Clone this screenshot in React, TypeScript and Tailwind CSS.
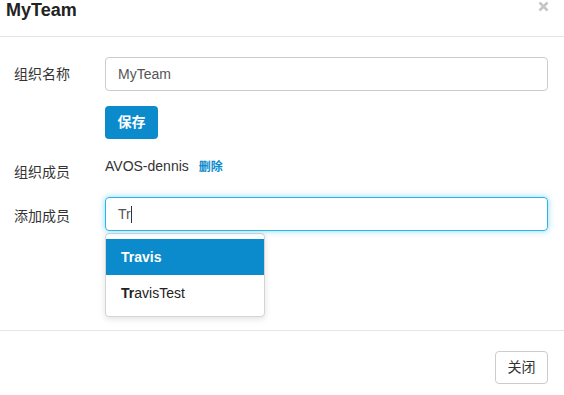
export default function App() {
  const font = { fontFamily: '"Liberation Sans", Arial, "Noto Sans CJK SC", sans-serif' };
  return (
    <div
      className="w-[564px] h-[395px] bg-white text-[#333] text-[14px] flex flex-col overflow-hidden"
      style={font}
    >
      {/* header */}
      <div className="h-[37px] border-b border-[#e5e5e5] flex justify-between pl-[6px] pr-[15px]">
        <h4 className="text-[18px] leading-[20px] font-bold text-[#222]">MyTeam</h4>
        <svg width="11" height="11" viewBox="0 0 11 11" className="mt-[1px]">
          <path d="M1.5 1.5 L9.5 9.5 M9.5 1.5 L1.5 9.5" stroke="#c6c6c6" strokeWidth="2.6" />
        </svg>
      </div>

      {/* body */}
      <div className="h-[294px] border-b border-[#e5e5e5] pt-[20px] pl-[14px] pr-[16px]">
        <div className="flex items-center">
          <label className="w-[91px] leading-[20px]">组织名称</label>
          <div className="flex-1 h-[34px] border border-[#ccc] rounded-[4px] px-[12px] flex items-center text-[#555]">
            MyTeam
          </div>
        </div>

        <div className="pl-[91px] mt-[15px]">
          <button className="w-[53px] h-[33px] rounded-[4px] bg-[#0b8bcc] text-white font-bold">
            保存
          </button>
        </div>

        <div className="flex mt-[17px] h-[41px]">
          <label className="w-[91px] pt-[6px] leading-[20px]">组织成员</label>
          <div className="leading-[20px] flex items-baseline gap-[10px]">
            <span>AVOS-dennis</span>
            <a className="text-[12px] text-[#0b8bcc] font-bold">删除</a>
          </div>
        </div>

        <div className="flex items-center">
          <label className="w-[91px] leading-[20px] pt-[4px]">添加成员</label>
          <div className="flex-1 h-[34px] border border-[#2bb4ea] rounded-[4px] px-[12px] flex items-center text-[#555] shadow-[0_0_6px_rgba(43,180,234,0.55)]">
            Tr<span className="w-px h-[17px] bg-[#333]" />
          </div>
        </div>

        <div className="ml-[91px] mt-[2px] w-[160px] py-[5px] border border-[#d4d4d4] rounded-[4px] bg-white shadow-[0_2px_6px_rgba(0,0,0,0.12)]">
          <div className="h-[36px] bg-[#0b8bcc] text-white font-bold pl-[15px] flex items-center">
            <strong className="font-extrabold">Tr</strong>avis
          </div>
          <div className="h-[36px] pl-[15px] flex items-center text-[#222]">
            <strong>Tr</strong>avisTest
          </div>
        </div>
      </div>

      {/* footer */}
      <div className="flex justify-end pt-[20px] pr-[16px]">
        <button className="w-[53px] h-[33px] rounded-[4px] border border-[#ccc] bg-white text-[#333]">
          关闭
        </button>
      </div>
    </div>
  );
}
